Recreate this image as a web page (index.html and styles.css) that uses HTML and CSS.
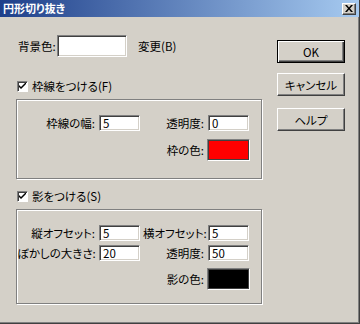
FILE: index.html
```html
<!DOCTYPE html>
<html lang="ja">
<head>
    <meta charset="UTF-8">
    <title>円形切り抜き</title>
    <link rel="stylesheet" href="styles.css">
</head>
<body>
<div class="dialog">
    <div class="titlebar">
        <span class="title">円形切り抜き</span>
        <span class="close-btn">
            <svg width="8" height="7" viewBox="0 0 8 7"><path d="M0 0h2l2 2.5L6 0h2L5 3.5 8 7H6L4 4.5 2 7H0l3-3.5z" fill="#000"/></svg>
        </span>
    </div>
    <div class="content">
        <div class="main">
            <div class="bg-row">
                <span class="bg-label">背景色:</span>
                <span class="field bg-box"></span>
                <span class="bg-change">変更(B)</span>
            </div>

            <div class="check-row">
                <span class="checkbox">
                    <svg width="7" height="7" viewBox="0 0 7 7"><path d="M0 2v2l2 2 5-5V-1L2 4z" fill="#000"/></svg>
                </span>
                <span>枠線をつける(F)</span>
            </div>
            <!-- 枠線 -->
            <div class="group group-border">
                <span class="lbl">枠線の幅:</span>
                <span class="field">5</span>
                <span class="lbl">透明度:</span>
                <span class="field">0</span>
                <span class="lbl wide">枠の色:</span>
                <span class="swatch red"></span>
            </div>

            <div class="check-row check-shadow">
                <span class="checkbox">
                    <svg width="7" height="7" viewBox="0 0 7 7"><path d="M0 2v2l2 2 5-5V-1L2 4z" fill="#000"/></svg>
                </span>
                <span>影をつける(S)</span>
            </div>
            <!-- 影 -->
            <div class="group group-shadow">
                <span class="lbl">縦オフセット:</span>
                <span class="field">5</span>
                <span class="lbl">横オフセット:</span>
                <span class="field">5</span>
                <span class="lbl">ぼかしの大きさ:</span>
                <span class="field">20</span>
                <span class="lbl">透明度:</span>
                <span class="field">50</span>
                <span class="lbl wide">影の色:</span>
                <span class="swatch black"></span>
            </div>
        </div>
        <div class="buttons">
            <div class="btn default"><span>OK</span></div>
            <div class="btn btn-cancel"><span>キャンセル</span></div>
            <div class="btn btn-help"><span>ヘルプ</span></div>
        </div>
    </div>
</div>
</body>
</html>
```

FILE: styles.css
```css
* {
    margin: 0;
    padding: 0;
    box-sizing: border-box;
}

body {
    font-family: "Noto Sans CJK JP", "Liberation Sans", sans-serif;
    font-size: 11.5px;
    font-feature-settings: "palt";
    color: #000;
    background: #d4d0c8;
}

.dialog {
    width: 360px;
    height: 324px;
    background: #d4d0c8;
    border-right: 1px solid #404040;
    border-bottom: 1px solid #404040;
    box-shadow: inset -1px -1px #808080;
}

.titlebar {
    height: 17px;
    display: flex;
    align-items: center;
    justify-content: space-between;
    padding: 0 3px 0 3px;
    background: linear-gradient(to right, #1e3f8a, #a6caf0);
}

.title {
    color: #fff;
    font-weight: bold;
    font-size: 11px;
    line-height: 17px;
}

.close-btn {
    width: 14px;
    height: 12px;
    display: flex;
    align-items: center;
    justify-content: center;
    background: #d4d0c8;
    border: 1px solid;
    border-color: #fff #404040 #404040 #fff;
    box-shadow: inset -1px -1px #808080;
}

.content {
    display: flex;
}

.main {
    width: 263px;
    padding-left: 16px;
    display: flex;
    flex-direction: column;
}

.bg-row {
    margin-top: 18px;
    height: 22px;
    display: flex;
    align-items: center;
}

.bg-label {
    width: 39px;
    flex-shrink: 0;
    margin-left: 2px;
    white-space: nowrap;
}

.field {
    height: 16px;
    background: #fff;
    border: 1px solid;
    border-color: #808080 #fff #fff #808080;
    box-shadow: inset 1px 1px #404040, inset -1px -1px #d4d0c8;
    padding-left: 3px;
    line-height: 14px;
}

.bg-box {
    width: 70px;
    height: 22px;
    flex-shrink: 0;
}

.bg-change {
    margin-left: 11px;
}

.check-row {
    height: 13px;
    margin-top: 23px;
    display: flex;
    align-items: center;
    line-height: 13px;
}

.check-shadow {
    margin-top: 11px;
}

.checkbox {
    width: 11px;
    height: 11px;
    margin-left: 1px;
    margin-right: 4px;
    background: #fff;
    border: 1px solid;
    border-color: #808080 #fff #fff #808080;
    box-shadow: inset 1px 1px #404040;
    display: flex;
    align-items: center;
    justify-content: center;
}

.group {
    margin-top: 6px;
    width: 246px;
    border: 1px solid #808080;
    box-shadow: inset 1px 1px #fff, 1px 1px #fff;
    display: grid;
    grid-template-columns: 79px 41px 62px 41px;
    column-gap: 3px;
    align-items: center;
    padding-top: 15px;
}

.group-border {
    height: 80px;
    grid-template-rows: 16px 22px;
    row-gap: 8px;
}

.group-shadow {
    height: 95px;
    grid-template-rows: 16px 16px 22px;
    row-gap: 4px;
}

.group-shadow .wide {
    margin-top: 6px;
}

.group-shadow .swatch {
    margin-top: 6px;
}

.lbl {
    text-align: right;
    white-space: nowrap;
    padding-right: 1px;
}

.lbl.wide {
    grid-column: 1 / 4;
}

.swatch {
    width: 43px;
    height: 22px;
    margin-left: -1px;
    border: 1px solid;
    border-color: #808080 #fff #fff #808080;
    box-shadow: inset 1px 1px #404040, inset -1px -1px #404040;
}

.red {
    background: #ff0000;
}

.black {
    background: #000;
}

.buttons {
    margin-left: 14px;
    padding-top: 23px;
    display: flex;
    flex-direction: column;
}

.btn {
    width: 68px;
    height: 23px;
    display: flex;
    align-items: center;
    justify-content: center;
    border: 1px solid;
    border-color: #fff #404040 #404040 #fff;
    box-shadow: inset -1px -1px #808080;
}

.btn.default {
    border: 1px solid #000;
    box-shadow: inset 1px 1px #fff, inset -1px -1px #404040, inset -2px -2px #808080;
}

.btn-cancel {
    margin-top: 10px;
}

.btn-help {
    margin-top: 12px;
}
```
